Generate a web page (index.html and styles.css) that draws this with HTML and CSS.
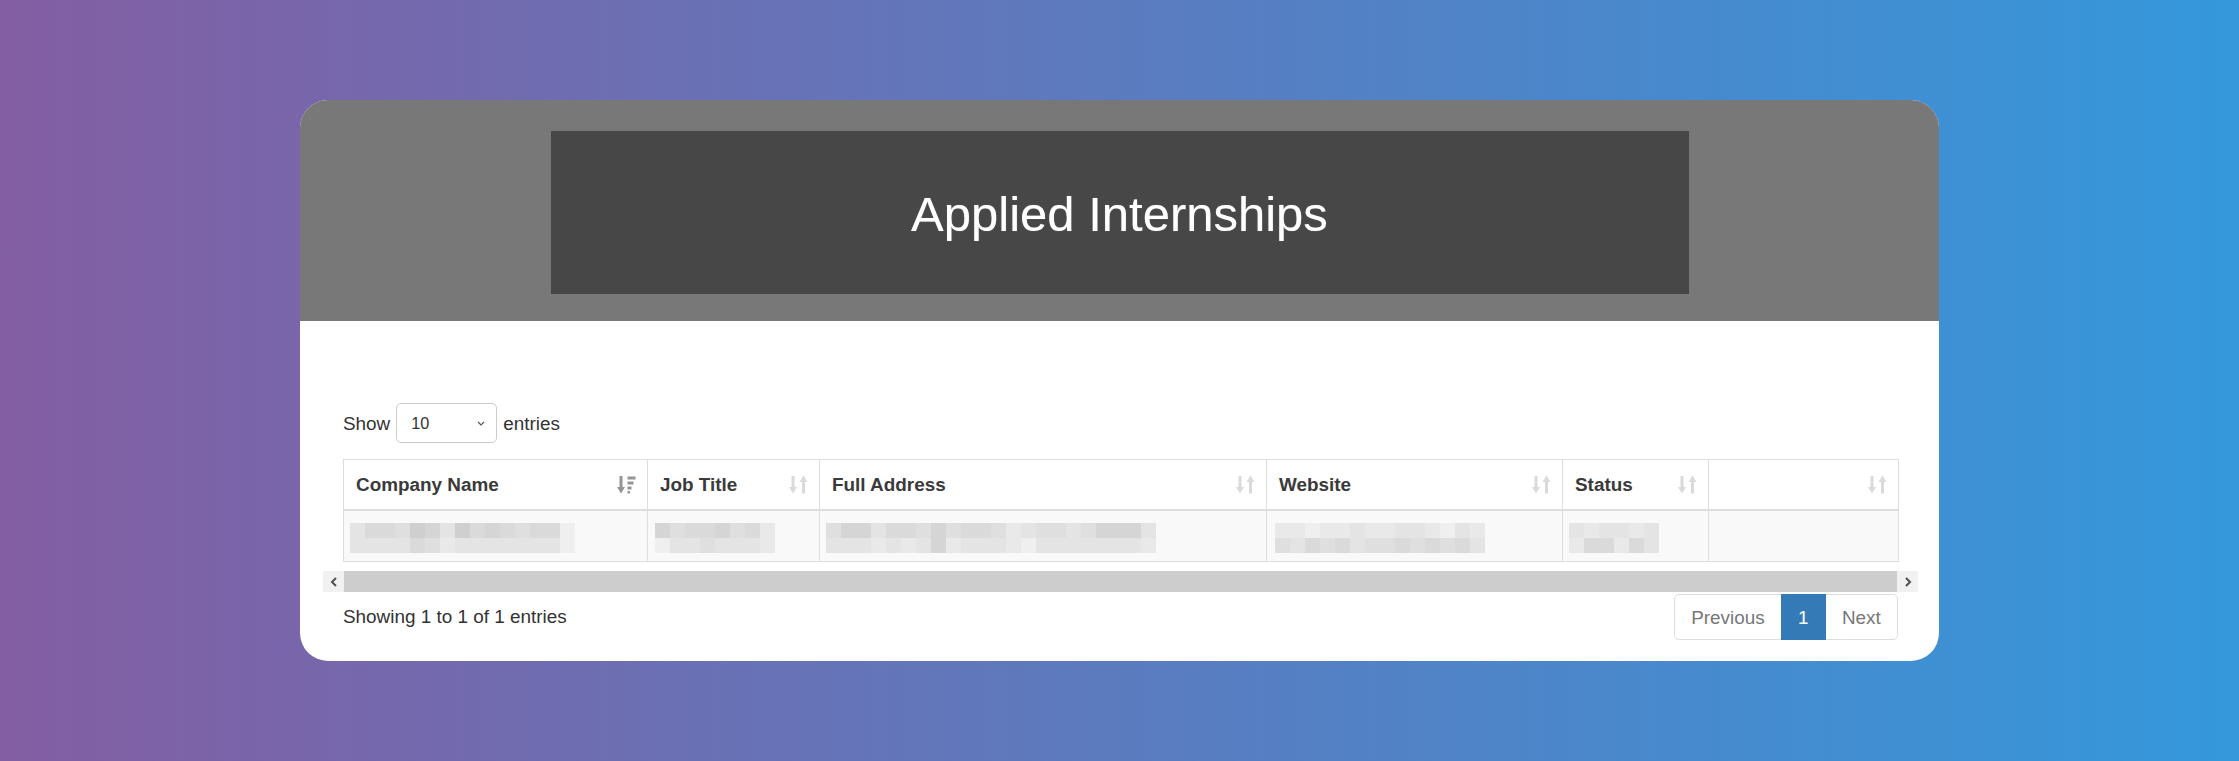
FILE: index.html
```html
<!DOCTYPE html>
<html lang="en">
<head>
<meta charset="utf-8">
<title>Applied Internships</title>
<link rel="stylesheet" href="styles.css">
</head>
<body>
<div class="page">
  <div class="card">
    <header class="card-head">
      <div class="title-box"><h1>Applied Internships</h1></div>
    </header>
    <section class="card-body">
      <div class="length">
        <span>Show</span>
        <div class="select"><span>10</span><svg class="chev" width="8" height="5" viewBox="0 0 8 5"><polyline points="1,1 4,4 7,1" fill="none" stroke="#555" stroke-width="1.2"/></svg></div>
        <span>entries</span>
      </div>
      <div class="scroll">
        <div class="scroll-inner">
          <table class="grid">
            <colgroup>
              <col class="w1"><col class="w2"><col class="w3"><col class="w4"><col class="w5"><col class="w6">
            </colgroup>
            <thead>
              <tr>
                <th><div class="th"><span>Company Name</span><svg class="sort desc" width="19" height="19" viewBox="0 0 19 19"><rect x="2.5" y="1" width="3" height="12"/><polygon points="0,12 8,12 4,18.5"/><rect x="10.5" y="1.5" width="8" height="3"/><rect x="10.5" y="6.5" width="6" height="3"/><rect x="10.5" y="11.5" width="4" height="3"/><rect x="10.5" y="16" width="2.5" height="2.5"/></svg></div></th>
                <th><div class="th"><span>Job Title</span><svg class="sort" width="19" height="19" viewBox="0 0 19 19"><rect x="2.5" y="1" width="3" height="12"/><polygon points="0,12 8,12 4,18.5"/><polygon points="10.5,7 18.5,7 14.5,0.5"/><rect x="13" y="6" width="3" height="12.5"/></svg></div></th>
                <th><div class="th"><span>Full Address</span><svg class="sort" width="19" height="19" viewBox="0 0 19 19"><rect x="2.5" y="1" width="3" height="12"/><polygon points="0,12 8,12 4,18.5"/><polygon points="10.5,7 18.5,7 14.5,0.5"/><rect x="13" y="6" width="3" height="12.5"/></svg></div></th>
                <th><div class="th"><span>Website</span><svg class="sort" width="19" height="19" viewBox="0 0 19 19"><rect x="2.5" y="1" width="3" height="12"/><polygon points="0,12 8,12 4,18.5"/><polygon points="10.5,7 18.5,7 14.5,0.5"/><rect x="13" y="6" width="3" height="12.5"/></svg></div></th>
                <th><div class="th"><span>Status</span><svg class="sort" width="19" height="19" viewBox="0 0 19 19"><rect x="2.5" y="1" width="3" height="12"/><polygon points="0,12 8,12 4,18.5"/><polygon points="10.5,7 18.5,7 14.5,0.5"/><rect x="13" y="6" width="3" height="12.5"/></svg></div></th>
                <th><div class="th"><span></span><svg class="sort" width="19" height="19" viewBox="0 0 19 19"><rect x="2.5" y="1" width="3" height="12"/><polygon points="0,12 8,12 4,18.5"/><polygon points="10.5,7 18.5,7 14.5,0.5"/><rect x="13" y="6" width="3" height="12.5"/></svg></div></th>
              </tr>
            </thead>
            <tbody>
              <tr>
                <td><div class="mosaic m15">
                  <i class="e"></i><i class="c"></i><i class="c"></i><i class="d"></i><i class="a"></i><i class="b"></i><i class="e"></i><i class="a"></i><i class="c"></i><i class="b"></i><i class="c"></i><i class="d"></i><i class="c"></i><i class="c"></i><i class="g"></i>
                  <i class="e"></i><i class="e"></i><i class="e"></i><i class="e"></i><i class="c"></i><i class="d"></i><i class="f"></i><i class="e"></i><i class="e"></i><i class="e"></i><i class="e"></i><i class="e"></i><i class="e"></i><i class="e"></i><i class="g"></i>
                </div></td>
                <td><div class="mosaic m8">
                  <i class="b"></i><i class="d"></i><i class="c"></i><i class="c"></i><i class="b"></i><i class="d"></i><i class="c"></i><i class="f"></i>
                  <i class="g"></i><i class="e"></i><i class="e"></i><i class="d"></i><i class="e"></i><i class="e"></i><i class="e"></i><i class="f"></i>
                </div></td>
                <td><div class="mosaic m22">
                  <i class="d"></i><i class="b"></i><i class="b"></i><i class="e"></i><i class="c"></i><i class="c"></i><i class="d"></i><i class="b"></i><i class="d"></i><i class="c"></i><i class="c"></i><i class="d"></i><i class="f"></i><i class="e"></i><i class="d"></i><i class="d"></i><i class="e"></i><i class="d"></i><i class="b"></i><i class="b"></i><i class="b"></i><i class="e"></i>
                  <i class="e"></i><i class="e"></i><i class="e"></i><i class="f"></i><i class="e"></i><i class="f"></i><i class="e"></i><i class="b"></i><i class="f"></i><i class="e"></i><i class="e"></i><i class="e"></i><i class="f"></i><i class="g"></i><i class="e"></i><i class="e"></i><i class="e"></i><i class="e"></i><i class="e"></i><i class="e"></i><i class="e"></i><i class="f"></i>
                </div></td>
                <td><div class="mosaic m14">
                  <i class="f"></i><i class="f"></i><i class="g"></i><i class="f"></i><i class="f"></i><i class="e"></i><i class="f"></i><i class="f"></i><i class="e"></i><i class="e"></i><i class="f"></i><i class="g"></i><i class="e"></i><i class="f"></i>
                  <i class="d"></i><i class="e"></i><i class="c"></i><i class="d"></i><i class="c"></i><i class="e"></i><i class="d"></i><i class="d"></i><i class="c"></i><i class="d"></i><i class="c"></i><i class="d"></i><i class="c"></i><i class="e"></i>
                </div></td>
                <td><div class="mosaic m6">
                  <i class="e"></i><i class="f"></i><i class="e"></i><i class="e"></i><i class="f"></i><i class="e"></i>
                  <i class="f"></i><i class="c"></i><i class="c"></i><i class="f"></i><i class="c"></i><i class="e"></i>
                </div></td>
                <td></td>
              </tr>
            </tbody>
          </table>
        </div>
        <div class="scrollbar">
          <div class="sb-btn"><svg width="8" height="10" viewBox="0 0 8 10"><polyline points="6,1 2,5 6,9" fill="none" stroke="#505050" stroke-width="2"/></svg></div>
          <div class="sb-track"></div>
          <div class="sb-btn"><svg width="8" height="10" viewBox="0 0 8 10"><polyline points="2,1 6,5 2,9" fill="none" stroke="#505050" stroke-width="2"/></svg></div>
        </div>
      </div>
      <div class="foot">
        <div class="info">Showing 1 to 1 of 1 entries</div>
        <ul class="pagination">
          <li class="pg disabled">Previous</li>
          <li class="pg active">1</li>
          <li class="pg disabled">Next</li>
        </ul>
      </div>
    </section>
  </div>
</div>
</body>
</html>
```

FILE: styles.css
```css
* { box-sizing: border-box; }
html, body { margin: 0; padding: 0; }
body {
  font-family: "Liberation Sans", Arial, sans-serif;
  font-size: 18.9px;
  line-height: 27px;
  color: #333;
  background: linear-gradient(to right, #835ea3, #3498db);
  min-height: 761px;
}
.page {
  height: 761px;
  padding-top: 100px;
}
.card {
  width: 1639px;
  margin: 0 auto;
  background: #fff;
  border-radius: 28px;
  overflow: hidden;
}
.card-head {
  background: #787878;
  height: 221px;
  padding-top: 31px;
}
.title-box {
  width: 1138px;
  height: 163px;
  margin: 0 auto;
  background: #474747;
  display: flex;
  align-items: center;
  justify-content: center;
}
.title-box h1 {
  margin: 0;
  font-weight: normal;
  font-size: 49px;
  line-height: 56px;
  color: #fff;
  padding-top: 2px;
  text-shadow: 0 0 1px rgba(255, 255, 255, 0.4);
}
.card-body {
  padding: 82px 41px 21px 43px;
}
.length {
  display: flex;
  align-items: center;
  gap: 6px;
  height: 40px;
}
.select {
  width: 101px;
  height: 40px;
  border: 1px solid #ccc;
  border-radius: 5px;
  display: flex;
  align-items: center;
  justify-content: space-between;
  padding: 0 11px 0 14px;
  font-size: 16.2px;
  color: #333;
}
.chev { display: block; }
.scroll {
  margin: 16px -20px 0;
}
.scroll-inner {
  padding: 0 20px 9px;
}
.grid {
  width: 1555px;
  table-layout: fixed;
  border-collapse: collapse;
}
.w1 { width: 304px; }
.w2 { width: 172px; }
.w3 { width: 447px; }
.w4 { width: 296px; }
.w5 { width: 146px; }
.w6 { width: 190px; }
.grid th, .grid td {
  border: 1px solid #ddd;
}
.grid th {
  border-bottom: 2px solid #ddd;
  padding: 11px 11px 11px 12px;
  text-align: left;
  font-weight: bold;
  color: #3a3a3a;
}
.th {
  display: flex;
  align-items: center;
  justify-content: space-between;
  line-height: 27px;
}
.sort { display: block; fill: #dadada; flex: none; }
.sort.desc { fill: #959595; }
.grid tbody tr { background: #f9f9f9; }
.grid td {
  padding: 12px 6px 8px 6px;
  vertical-align: top;
}
.mosaic {
  display: grid;
  grid-auto-rows: 15px;
}
.m15 { grid-template-columns: repeat(15, 15px); }
.m8 { grid-template-columns: repeat(8, 15px); padding-left: 1px; }
.m22 { grid-template-columns: repeat(22, 15px); }
.m14 { grid-template-columns: repeat(14, 15px); padding-left: 2px; }
.m6 { grid-template-columns: repeat(6, 15px); }
.mosaic i { display: block; }
.mosaic .a { background: #cfcfcf; }
.mosaic .b { background: #d5d5d5; }
.mosaic .c { background: #dadada; }
.mosaic .d { background: #dfdfdf; }
.mosaic .e { background: #e4e4e4; }
.mosaic .f { background: #e9e9e9; }
.mosaic .g { background: #efefef; }
.scrollbar {
  display: flex;
  height: 21px;
}
.sb-btn {
  width: 21px;
  flex: none;
  background: #f1f1f1;
  display: flex;
  align-items: center;
  justify-content: center;
}
.sb-track {
  flex: 1;
  background: #cdcdcd;
}
.foot {
  display: flex;
  justify-content: space-between;
  align-items: flex-start;
  margin-top: 2px;
}
.info {
  padding-top: 8.5px;
}
.pagination {
  list-style: none;
  margin: 0;
  padding: 0;
  display: flex;
}
.pg {
  height: 46px;
  line-height: 27px;
  padding: 9px 16.2px;
  border: 1px solid #ddd;
  margin-left: -1px;
  color: #777;
  background: #fff;
}
.pg:first-child {
  margin-left: 0;
  border-radius: 5px 0 0 5px;
}
.pg:last-child {
  border-radius: 0 5px 5px 0;
}
.pg.active {
  background: #337ab7;
  border-color: #337ab7;
  color: #fff;
  position: relative;
  z-index: 1;
}
```
